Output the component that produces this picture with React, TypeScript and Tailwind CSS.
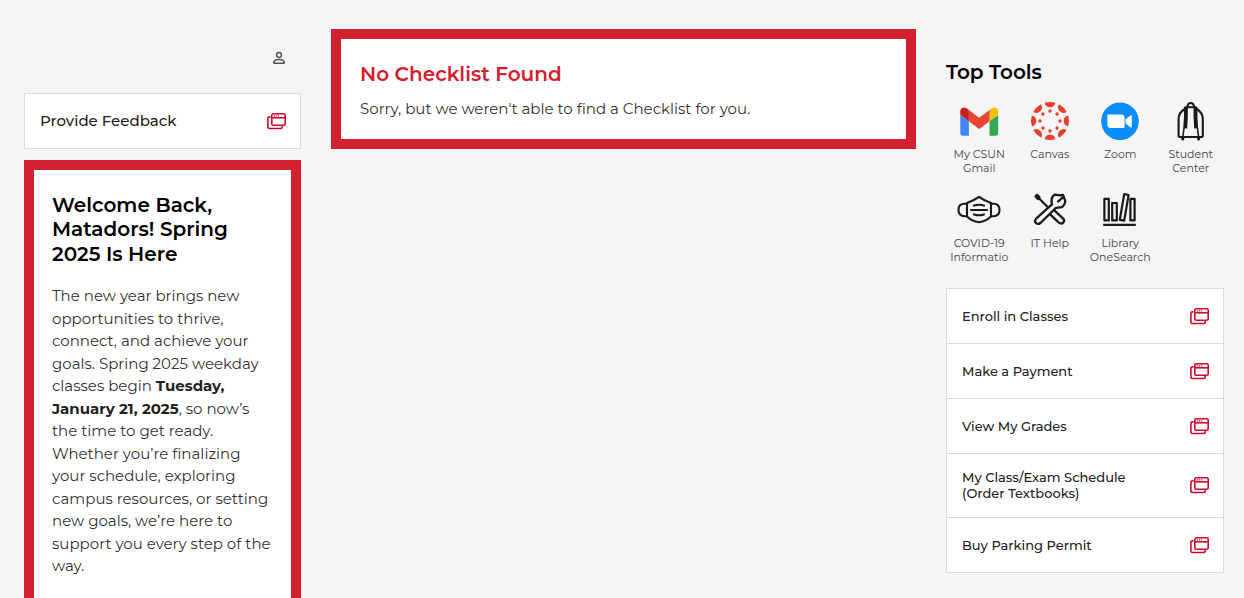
import type { ReactNode } from "react";

const WindowsIcon = () => (
  <svg viewBox="0 0 20 18" className="h-[18px] w-5 shrink-0" fill="none" stroke="#cf0a2c" strokeWidth="1.6" aria-hidden="true">
    <rect x="4.8" y="1.8" width="13.4" height="11.4" rx="1.4" />
    <path d="M4.8 5.8h13.4" />
    <path d="M3.6 4.9H2.6Q.9 4.9 .9 6.6V14.8Q.9 16.5 2.6 16.5H13.6Q15.3 16.5 15.3 14.8V13.8" />
    <path d="M6.8 3.8h5.4" strokeWidth="1.2" strokeDasharray="1.2 0.8" />
  </svg>
);

const GmailIcon = () => (
  <svg viewBox="49 27 93 93" className="size-10" aria-hidden="true">
    <path fill="#4285f4" d="M58 108h14V74L52 59v43c0 3.32 2.69 6 6 6" />
    <path fill="#34a853" d="M120 108h14c3.32 0 6-2.69 6-6V59l-20 15" />
    <path fill="#fbbc04" d="M120 48v26l20-15v-8c0-7.42-8.47-11.65-14.4-7.2" />
    <path fill="#ea4335" d="M72 74V48l24 18 24-18v26L96 92" />
    <path fill="#c5221f" d="M52 51v8l20 15V48l-5.6-4.2c-5.94-4.45-14.4-.22-14.4 7.2" />
  </svg>
);

const CanvasIcon = () => (
  <svg viewBox="0 0 40 40" className="size-10" fill="#e5402c" aria-hidden="true">
    {[0, 45, 90, 135, 180, 225, 270, 315].map((angle) => (
      <g key={angle} transform={`rotate(${angle} 20 20)`}>
        <path d="M14.6 1.8A19 19 0 0 1 25.4 1.8A5.5 5.5 0 0 1 14.6 1.8Z" />
        <circle cx="20" cy="10" r="1.7" />
      </g>
    ))}
  </svg>
);

const ZoomIcon = () => (
  <svg viewBox="0 0 40 40" className="size-10" aria-hidden="true">
    <circle cx="20" cy="20.3" r="18.8" fill="#0b8cff" />
    <path fill="#fff" d="M7.4 14.6q0-1.1 1.1-1.1h12.6q3.5 0 3.5 3.5v8.9q0 1.1-1.1 1.1H10.9q-3.5 0-3.5-3.5ZM25.6 18.2l4.8-3.8q1.4-.7 1.4.7v10.4q0 1.4-1.4.7l-4.8-3.8Z" />
  </svg>
);

const BackpackIcon = () => (
  <svg viewBox="0 0 40 40" className="size-10" fill="none" stroke="#1a1a1a" strokeWidth="2.1" strokeLinejoin="round" strokeLinecap="round" aria-hidden="true">
    <path d="M16.6 5.6V4.8Q17 2 19.7 2T22.8 4.8V5.6" />
    <path d="M14.6 6.2H24.8M13.8 8Q7.6 11.4 7.6 18.5V34.4Q7.6 36 9.2 36H30.2Q31.8 36 31.8 34.4V18.5Q31.8 11.4 25.6 8" />
    <path d="M14.9 6V16L14.2 27.4M24.5 6V16L25.2 27.4" strokeWidth="3.9" strokeLinecap="butt" />
    <path d="M13 27 11.8 36M26.4 27 27.6 36" strokeWidth="1.6" />
    <path d="M11.8 37.2v.8M27.6 37.2v.8" strokeWidth="3" />
  </svg>
);

const MaskIcon = () => (
  <svg viewBox="0 0 44 40" className="h-10 w-11" fill="none" stroke="#1a1a1a" strokeWidth="2.1" strokeLinejoin="round" strokeLinecap="round" aria-hidden="true">
    <path d="M22 6.8Q17 10.4 10 13V26.4Q15 31.2 22 32.2Q29 31.2 34 26.4V13Q27 10.4 22 6.8Z" />
    <path d="M10 13.8H7.6Q1.5 13.8 1.5 20T7.6 26.2H10M34 13.8H36.4Q42.5 13.8 42.5 20T36.4 26.2H34" />
    <path d="M17 15.6Q22 14 27 15.6M14 20H30M17 24.4Q22 26 27 24.4" />
  </svg>
);

const ToolsIcon = () => (
  <svg viewBox="0 0 40 40" className="size-10" fill="none" stroke="#1a1a1a" strokeWidth="2.3" strokeLinejoin="round" strokeLinecap="round" aria-hidden="true">
    <path d="M7 6.4 8.2 7.6" strokeWidth="4.8" />
    <path d="M8.6 8 17.6 17" />
    <path d="M24.6 20.6 33.2 28.6Q35 30.8 33.2 32.6T28.8 32.6L20.4 24.6" />
    <path d="M22 14.4Q20 7.6 25 4.6L30 5.4 33 5 35.4 11.4Q35 14.6 32 17.2L26 17.8 10.4 33Q8 34.8 6 33T6 28.6L22 14.4Z" />
    <path d="M33.6 6.6 28 11.6" />
  </svg>
);

const BooksIcon = () => (
  <svg viewBox="0 0 40 40" className="size-10" fill="none" stroke="#1a1a1a" strokeWidth="2.2" strokeLinejoin="round" aria-hidden="true">
    <path d="M4.4 8.8H8.8V30.4H4.4ZM12.2 13H16.8V30.4H12.2ZM30.4 8.8H34.6V30.4H30.4Z" />
    <path d="M24.2 4.2 28.6 5 24.2 30.6 19.8 29.8Z" />
    <path d="M3.2 34.8H35.8" />
  </svg>
);

const tools: { lines: string[]; icon: ReactNode }[] = [
  { lines: ["My CSUN", "Gmail"], icon: <GmailIcon /> },
  { lines: ["Canvas"], icon: <CanvasIcon /> },
  { lines: ["Zoom"], icon: <ZoomIcon /> },
  { lines: ["Student", "Center"], icon: <BackpackIcon /> },
  { lines: ["COVID-19", "Informatio"], icon: <MaskIcon /> },
  { lines: ["IT Help"], icon: <ToolsIcon /> },
  { lines: ["Library", "OneSearch"], icon: <BooksIcon /> },
];

const links = [
  { lines: ["Enroll in Classes"] },
  { lines: ["Make a Payment"] },
  { lines: ["View My Grades"] },
  { lines: ["My Class/Exam Schedule", "(Order Textbooks)"] },
  { lines: ["Buy Parking Permit"] },
];

const Lines = ({ lines }: { lines: string[] }) => (
  <span>
    {lines.map((line) => (
      <span key={line} className="block whitespace-nowrap">{line}</span>
    ))}
  </span>
);

const App = () => {
  return (
    <main className="grid min-h-screen grid-cols-[277fr_585fr_278fr] items-start gap-[30px] bg-[#f5f5f5] pl-6 pr-5 font-[Montserrat,sans-serif] text-[#222]">
      <div>
        <div className="flex justify-end px-[15px] pt-[51px]">
          <button type="button" aria-label="Profile">
            <svg viewBox="0 0 14 14" className="size-3.5" fill="none" stroke="#555" strokeWidth="1.5" aria-hidden="true">
              <circle cx="7" cy="4" r="2.4" />
              <path d="M1.8 12.2V11.2Q2.2 8.4 7 8.4T12.2 11.2V12.2Z" strokeLinejoin="round" />
            </svg>
          </button>
        </div>
        <a href="#feedback" className="mt-7 flex h-14 items-center justify-between border border-[#dcdcdc] bg-white pr-[13px] pl-[15px] text-[15px] font-medium">
          Provide Feedback
          <WindowsIcon />
        </a>
        <article className="mt-[11px] border-10 border-[#d32030] bg-white px-[18px] pt-[23px] pb-10">
          <h2 className="text-xl/[1.22] font-semibold text-black">
            Welcome Back, Matadors! Spring 2025 Is Here
          </h2>
          <p className="mt-[19px] text-[15px] leading-normal text-[#333]">
            The new year brings new opportunities to thrive, connect, and
            achieve your goals. Spring 2025 weekday classes begin{" "}
            <strong className="font-bold text-[#222]">Tuesday, January 21, 2025</strong>, so
            now’s the time to get ready. Whether you’re finalizing your
            schedule, exploring campus resources, or setting new goals, we’re
            here to support you every step of the way.
          </p>
        </article>
      </div>

      <section className="mt-[29px] border-10 border-[#d32030] bg-white px-[19px] pt-[23px] pb-[18px]">
        <h2 className="text-xl/6 font-semibold text-[#d32030]">No Checklist Found</h2>
        <p className="mt-[11px] text-[15px]/6 text-[#333]">
          Sorry, but we weren't able to find a Checklist for you.
        </p>
      </section>

      <aside className="pt-[60px]">
        <h2 className="text-xl/6 font-semibold text-black">Top Tools</h2>
        <div className="-mx-0.5 mt-[17px] grid grid-cols-4 gap-y-[15px]">
          {tools.map((tool) => (
            <a key={tool.lines[0]} href="#tool" className="mx-auto flex w-[60px] flex-col items-center gap-1.5 text-center text-[11px]/[14px] text-[#444]">
              {tool.icon}
              <Lines lines={tool.lines} />
            </a>
          ))}
        </div>
        <ul className="mt-6 border border-[#dcdcdc] bg-white">
          {links.map((link) => (
            <li key={link.lines[0]} className="border-b border-[#dcdcdc] last:border-b-0">
              <a href="#link" className="flex min-h-[54px] items-center justify-between pt-[15px] pb-4 pr-[13px] pl-[15px] text-[13px]/4 font-medium">
                <Lines lines={link.lines} />
                <WindowsIcon />
              </a>
            </li>
          ))}
        </ul>
      </aside>
    </main>
  );
};

export default App;
